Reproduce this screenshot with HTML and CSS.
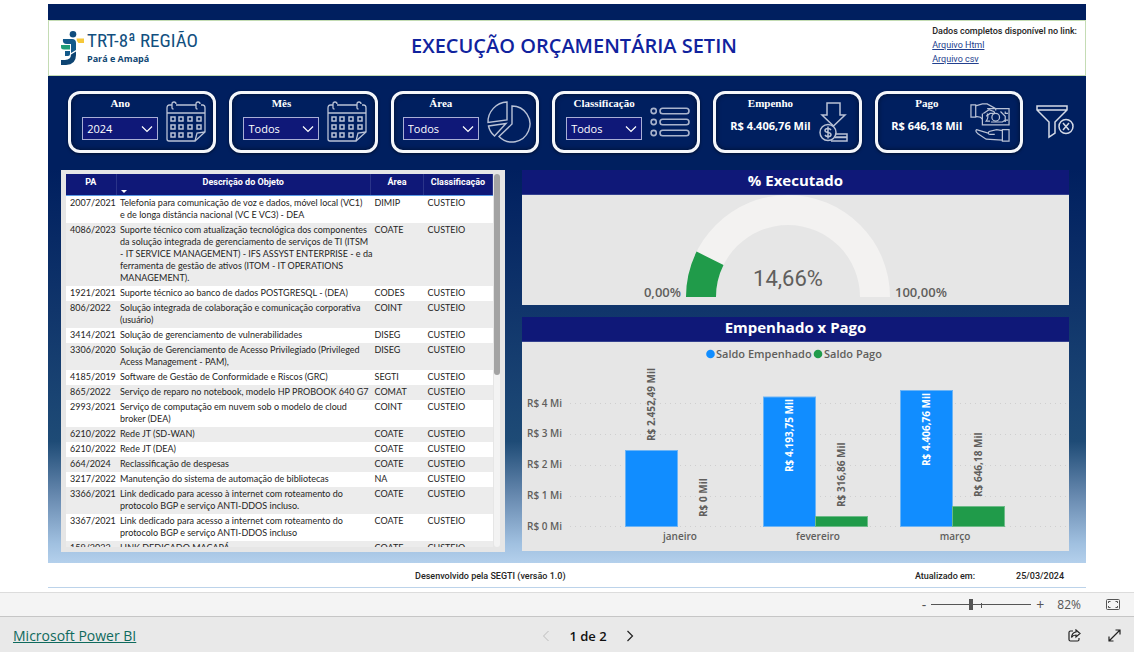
FILE: index.html
```html
<!DOCTYPE html>
<html lang="pt-BR">
<head>
<meta charset="utf-8">
<title>Execução Orçamentária SETIN</title>
<link rel="stylesheet" href="styles.css">
</head>
<body>
<svg class="defs" aria-hidden="true">
  <defs>
    <linearGradient id="body-blue" x1="0" y1="0" x2="0" y2="1"><stop offset="0" stop-color="#12598a"/><stop offset="1" stop-color="#0b3763"/></linearGradient>
    <symbol id="calendar" viewBox="0 0 40 42">
      <g fill="none" stroke="#b9c2d6" stroke-width="1.3">
        <path d="M6 4H3.500Q1 4 1 7V38Q1 40 3 40H29L39 31V7Q39 4 36.500 4H35M10 4H30M1 12H39"/>
        <path d="M6 7Q6 8 7.500 8 M6 7V3Q6 1 8 1Q10 1 10 3 M30 7V3Q30 1 32 1Q34 1 34 3 M30 7Q30 8 31.500 8"/>
        <path d="M29 40L31 32L39 31"/>
        <path stroke-width="1.500" d="M5 16h4v4h-4zM13 16h4v4h-4zM22 16h4v4h-4zM31 16h4v4h-4zM5 24h4v4h-4zM13 24h4v4h-4zM22 24h4v4h-4zM31 24h4v4h-4zM5 32h4v4h-4zM13 32h4v4h-4zM22 32h4v4h-4z"/>
      </g>
    </symbol>
    <symbol id="chevron" viewBox="0 0 12 8"><path d="M1 1.500L6 6.500L11 1.500" fill="none" stroke="#fff" stroke-width="1.200"/></symbol>
  </defs>
</svg>

<main class="report">
  <div class="band"></div>
  <header class="head">
    <div class="logo">
      <svg class="logo-mark" viewBox="0 0 24 34" aria-hidden="true">
        <circle cx="13" cy="3.300" r="3.300" fill="#0f4c7c"/>
        <path d="M3 8H12Q16 8 16 12V19L11 22V13H7Q2 13 3 8Z" fill="#12598a"/>
        <path d="M1 14H10V18.500H4Q1 18.500 1 16Z" fill="#1f9d77"/>
        <path d="M16.500 7.500H24V12H18.500Q16.500 10.500 16.500 7.500Z" fill="#f6c83a"/>
        <path d="M5 20H10V23Q10 25 8 25H5Z" fill="#12598a"/>
        <path d="M11 23.500L16 20.500V24Q16 33.500 6 34H1V29H5Q11 28.500 11 23.500Z" fill="#0d4472"/>
      </svg>
      <div class="logo-text"><span class="logo-name">TRT-8ª REGIÃO</span><span class="logo-sub">Pará e Amapá</span></div>
    </div>
    <h1>EXECUÇÃO ORÇAMENTÁRIA SETIN</h1>
    <div class="links"><strong>Dados completos disponível no link:</strong><a href="#html">Arquivo Html</a><a href="#csv">Arquivo csv</a></div>
  </header>

  <div class="body">
    <section class="cards">
      <div class="card">
        <div class="field"><label for="ano">Ano</label><div class="pick"><select id="ano"><option>2024</option></select><svg><use href="#chevron"/></svg></div></div>
        <svg class="icon" viewBox="0 0 40 42"><use href="#calendar"/></svg>
      </div>
      <div class="card">
        <div class="field"><label for="mes">Mês</label><div class="pick"><select id="mes"><option>Todos</option></select><svg><use href="#chevron"/></svg></div></div>
        <svg class="icon" viewBox="0 0 40 42"><use href="#calendar"/></svg>
      </div>
      <div class="card">
        <div class="field"><label for="area">Área</label><div class="pick"><select id="area"><option>Todos</option></select><svg><use href="#chevron"/></svg></div></div>
        <svg class="icon wide" viewBox="0 0 44 42"><g fill="none" stroke="#b9c2d6" stroke-width="1.400"><path d="M20 1V19L1 21.500A20 20 0 0 1 20 1Z"/><path d="M25 5A18 18 0 1 1 12 35.500L25 23Z"/><path d="M1.500 25L19 22.500L7.500 35A18 18 0 0 1 1.500 25Z"/></g></svg>
      </div>
      <div class="card">
        <div class="field"><label for="classe">Classificação</label><div class="pick"><select id="classe"><option>Todos</option></select><svg><use href="#chevron"/></svg></div></div>
        <svg class="icon" viewBox="0 0 40 42"><g fill="none" stroke="#a9b4cc" stroke-width="1.600"><circle cx="3.700" cy="10" r="2.600"/><circle cx="3.700" cy="21" r="2.600"/><circle cx="3.700" cy="32" r="2.600"/><rect x="10" y="7.300" width="29" height="5.400" rx="2.700"/><rect x="10" y="18.300" width="29" height="5.400" rx="2.700"/><rect x="10" y="29.300" width="29" height="5.400" rx="2.700"/></g></svg>
      </div>
      <div class="card">
        <div class="field"><span class="name">Empenho</span><output>R$ 4.406,76 Mil</output></div>
        <svg class="icon slim" viewBox="0 0 30 42"><g fill="none" stroke="#b9c2d6" stroke-width="1.500"><path d="M8 2H21V14H26L14.500 25L3 14H8Z"/><circle cx="9" cy="31.500" r="8"/><path d="M17 33H28V36H17M16 36.500H28V40H12"/><path d="M9 25.500V37.500M12 29Q11 27.500 9 27.500Q6 27.500 6 29.500Q6 31 9 31.500Q12 32 12 33.700Q12 35.500 9 35.500Q7 35.500 6 34"/></g></svg>
      </div>
      <div class="card">
        <div class="field"><span class="name">Pago</span><output>R$ 646,18 Mil</output></div>
        <svg class="icon" viewBox="0 0 42 42"><g fill="none" stroke="#b9c2d6" stroke-width="1.300"><path d="M1 3H6V16H1ZM6 4L13 2H18L27 7V9M6 15L11 16L13 18"/><path d="M18 7H41V24H13V12"/><path d="M14 12L20 8L25 10Q27 12 24 12L21 12L17 15"/><circle cx="27" cy="16" r="4"/><path d="M18 12Q20 16 17 20H21M37 10V12H40M37 21V19H40M32 10L37 15V19L34 21H22"/><path d="M34 29H41V41H34ZM34 30L28 29L20 31Q18 34 21 34H26M20 33L7 29Q5 30 8 33L17 39L34 40"/></g></svg>
      </div>
      <button class="clear" aria-label="Limpar filtros"><svg viewBox="0 0 38 34"><g fill="none" stroke="#d5dae6" stroke-width="1.500"><path d="M1 1H31V5L19 17V28L13 32V17L1 5ZM1 5H31"/><circle cx="30" cy="21.500" r="7" fill="#001f5f"/><path d="M27 18L33 25M33 18L27 25"/></g></svg></button>
    </section>

    <div class="panels">
      <section class="panel list">
        <div class="scroller">
          <table>
            <colgroup><col class="c-pa"><col><col class="c-area"><col class="c-class"></colgroup>
            <thead><tr><th>PA</th><th class="sorted">Descrição do Objeto</th><th>Área</th><th>Classificação</th></tr></thead>
            <tbody>
              <tr><td>2007/2021</td><td>Telefonia para comunicação de voz e dados, móvel local (VC1)<br>e de longa distância nacional (VC E VC3) - DEA</td><td>DIMIP</td><td>CUSTEIO</td></tr>
              <tr><td>4086/2023</td><td>Suporte técnico com atualização tecnológica dos componentes<br>da solução integrada de gerenciamento de serviços de TI (ITSM<br>- IT SERVICE MANAGEMENT) - IFS ASSYST ENTERPRISE - e da<br>ferramenta de gestão de ativos (ITOM - IT OPERATIONS<br>MANAGEMENT).</td><td>COATE</td><td>CUSTEIO</td></tr>
              <tr><td>1921/2021</td><td>Suporte técnico ao banco de dados POSTGRESQL - (DEA)</td><td>CODES</td><td>CUSTEIO</td></tr>
              <tr><td>806/2022</td><td>Solução integrada de colaboração e comunicação corporativa<br>(usuário)</td><td>COINT</td><td>CUSTEIO</td></tr>
              <tr><td>3414/2021</td><td>Solução de gerenciamento de vulnerabilidades</td><td>DISEG</td><td>CUSTEIO</td></tr>
              <tr><td>3306/2020</td><td>Solução de Gerenciamento de Acesso Privilegiado (Privileged<br>Acess Management - PAM),</td><td>DISEG</td><td>CUSTEIO</td></tr>
              <tr><td>4185/2019</td><td>Software de Gestão de Conformidade e Riscos (GRC)</td><td>SEGTI</td><td>CUSTEIO</td></tr>
              <tr><td>865/2022</td><td>Serviço de reparo no notebook, modelo HP PROBOOK 640 G7</td><td>COMAT</td><td>CUSTEIO</td></tr>
              <tr><td>2993/2021</td><td>Serviço de computação em nuvem sob o modelo de cloud<br>broker (DEA)</td><td>COINT</td><td>CUSTEIO</td></tr>
              <tr><td>6210/2022</td><td>Rede JT (SD-WAN)</td><td>COATE</td><td>CUSTEIO</td></tr>
              <tr><td>6210/2022</td><td>Rede JT (DEA)</td><td>COATE</td><td>CUSTEIO</td></tr>
              <tr><td>664/2024</td><td>Reclassificação de despesas</td><td>COATE</td><td>CUSTEIO</td></tr>
              <tr><td>3217/2022</td><td>Manutenção do sistema de automação de bibliotecas</td><td>NA</td><td>CUSTEIO</td></tr>
              <tr><td>3366/2021</td><td>Link dedicado para acesso à internet com roteamento do<br>protocolo BGP e serviço ANTI-DDOS incluso.</td><td>COATE</td><td>CUSTEIO</td></tr>
              <tr><td>3367/2021</td><td>Link dedicado para acesso a internet com roteamento do<br>protocolo BGP e serviço ANTI-DDOS incluso</td><td>COATE</td><td>CUSTEIO</td></tr>
              <tr><td>159/2022</td><td>LINK DEDICADO MACAPÁ</td><td>COATE</td><td>CUSTEIO</td></tr>
            </tbody>
          </table>
        </div>
        <div class="track"><div class="thumb"></div></div>
      </section>

      <div class="charts">
        <section class="panel">
          <h2>% Executado</h2>
          <svg class="chart" viewBox="0 0 547 110" role="img" aria-label="14,66% executado">
            <path d="M164 102A102 102 0 0 1 368 102H338A72 72 0 0 0 194 102Z" fill="#f3f2f1"/>
            <path d="M164 102A102 102 0 0 1 174.600 56.600L201.500 70A72 72 0 0 0 194 102Z" fill="#209b4a"/>
            <text class="gauge-value" x="266" y="91">14,66%</text>
            <text class="gauge-end right" x="159" y="102">0,00%</text>
            <text class="gauge-end" x="373" y="102">100,00%</text>
          </svg>
        </section>
        <section class="panel">
          <h2>Empenhado x Pago</h2>
          <svg class="chart" viewBox="0 0 547 209" role="img" aria-label="Empenhado x Pago por mês">
            <circle cx="188.500" cy="12" r="4.300" fill="#118dff"/><text class="legend" x="194" y="16">Saldo Empenhado</text>
            <circle cx="296" cy="12" r="4.300" fill="#209b4a"/><text class="legend" x="302" y="16">Saldo Pago</text>
            <g class="grid"><path d="M48 61.500H545M48 92.500H545M48 123.500H545M48 154.500H545M48 184.500H545"/></g>
            <g class="axis"><text x="5" y="65">R$ 4 Mi</text><text x="5" y="95">R$ 3 Mi</text><text x="5" y="126">R$ 2 Mi</text><text x="5" y="157">R$ 1 Mi</text><text x="5" y="188">R$ 0 Mi</text></g>
            <g fill="#118dff" stroke="#6cb4f5" stroke-width="1"><rect x="103.500" y="108.500" width="52" height="76"/><rect x="241.500" y="55" width="52" height="129.500"/><rect x="378.500" y="48.500" width="52" height="136"/></g>
            <g fill="#209b4a" stroke="#6dbb88" stroke-width="1"><rect x="293.500" y="174.500" width="52" height="10"/><rect x="430.500" y="164.500" width="52" height="20"/></g>
            <g class="axis mid"><text x="158" y="198">janeiro</text><text x="296" y="198">fevereiro</text><text x="433" y="198">março</text></g>
            <g class="bar-label">
              <text transform="translate(133 99) rotate(-90)">R$ 2.452,49 Mil</text>
              <text transform="translate(185 175) rotate(-90)">R$ 0 Mil</text>
              <text class="inside" transform="translate(271 130) rotate(-90)">R$ 4.193,75 Mil</text>
              <text transform="translate(323 165) rotate(-90)">R$ 316,86 Mil</text>
              <text class="inside" transform="translate(408 124) rotate(-90)">R$ 4.406,76 Mil</text>
              <text transform="translate(460 155) rotate(-90)">R$ 646,18 Mil</text>
            </g>
          </svg>
        </section>
      </div>
    </div>
  </div>

  <footer class="foot"><span class="by">Desenvolvido pela SEGTI (versão 1.0)</span><span>Atualizado em:</span><span>25/03/2024</span></footer>
</main>

<div class="zoombar">
  <button aria-label="Reduzir">-</button>
  <div class="slider"><input type="range" min="0" max="100" value="39" aria-label="Zoom"></div>
  <button aria-label="Ampliar">+</button>
  <span class="percent">82%</span>
  <button class="fit" aria-label="Ajustar à página"><svg viewBox="0 0 14 11"><g fill="none" stroke="#555" stroke-width="1"><rect x=".5" y=".5" width="13" height="10" rx="1"/><path d="M2.500 4V2.500H4.500M9.500 2.500H11.500V4M2.500 7V8.500H4.500M9.500 8.500H11.500V7"/></g></svg></button>
</div>
<nav class="navbar">
  <a href="#powerbi">Microsoft Power BI</a>
  <div class="pager">
    <button aria-label="Página anterior" disabled><svg viewBox="0 0 8 12"><path d="M6.500 1L1.500 6L6.500 11" fill="none" stroke="#bdbdbd"/></svg></button>
    <span>1 de 2</span>
    <button aria-label="Próxima página"><svg viewBox="0 0 8 12"><path d="M1.500 1L6.500 6L1.500 11" fill="none" stroke="#222" stroke-width="1.200"/></svg></button>
  </div>
  <div class="tools">
    <button aria-label="Compartilhar"><svg viewBox="0 0 13 13"><g fill="none" stroke="#222" stroke-width="1.200"><path d="M5 2H2.500Q1 2 1 3.500V10.500Q1 12 2.500 12H9.500Q11 12 11 10.500V9"/><path d="M8 1L12 4.500L8 8V6Q5 6 3.500 8.500Q4 3.500 8 3Z"/></g></svg></button>
    <button aria-label="Tela cheia"><svg viewBox="0 0 13 13"><path d="M7.500 1H12V5.500M12 1L1 12M1 7.500V12H5.500" fill="none" stroke="#222" stroke-width="1.200"/></svg></button>
  </div>
</nav>
</body>
</html>
```

FILE: styles.css
```css
* { box-sizing: border-box; }
body {
  margin: 0;
  background: #fff;
  font-family: "Open Sans", "Noto Sans", sans-serif;
  color: #252423;
}
button { border: 0; padding: 0; background: none; font: inherit; color: inherit; display: flex; }
.defs { position: absolute; width: 0; height: 0; }

.report { margin: 4px 48px; border-bottom: 1px solid #bcd3ea; }
.band { height: 16px; background: #001f5f; }

.head {
  display: grid;
  grid-template-columns: 1fr auto 1fr;
  align-items: center;
  height: 56px;
  border: 1px solid #c4dcb4;
}
.logo { display: flex; gap: 3px; padding-left: 11px; align-items: center; }
.logo-mark { width: 24px; height: 34px; }
.logo-text { display: flex; flex-direction: column; }
.logo-name { font: 400 19px/22px "Roboto Condensed", Roboto, sans-serif; color: #12507f; white-space: nowrap; }
.logo-sub { font-size: 9px; line-height: 14px; font-weight: 700; color: #0f4672; }
.head h1 { margin: 0; padding: 0 0 4px 14px; font-size: 20px; line-height: 28px; font-weight: 600; color: #10239e; white-space: nowrap; }
.links { justify-self: end; display: flex; flex-direction: column; padding: 0 8px 6px 0; font-size: 9px; line-height: 14px; white-space: nowrap; }
.links strong { font: 500 9px/14px Roboto, sans-serif; }
.links a { align-self: flex-start; color: #23408e; font-family: Roboto, sans-serif; }

.body {
  padding: 15px 17px 11px 13px;
  background: linear-gradient(#001f5f 0%, #001f5f 19%, #10356b 48%, #1e4b76 75%, #6688ae 86%, #a0c0e0 96%, #b4d0ec 100%);
}
.cards { display: flex; gap: 13px; padding: 0 0 0 7px; margin-right: -5px; align-items: center; }
.card {
  flex: 1;
  display: flex;
  justify-content: center;
  align-items: center;
  gap: 8px;
  height: 62px;
  padding-left: 4px;
  border: 3px solid #f4f6fa;
  border-radius: 12px;
  box-shadow: 0 1px 3px #0008, inset 0 0 5px #0008;
}
.field { display: flex; flex-direction: column; align-items: center; height: 52px; gap: 7px; }
.field label, .field .name { font: 700 11px/14px "Liberation Serif", serif; color: #fff; }
.pick { position: relative; width: 76px; }
.pick select {
  display: block;
  appearance: none;
  width: 100%;
  height: 23px;
  padding: 0 4px;
  border: 1px solid #a9afd6;
  border-radius: 0;
  background: #0f1878;
  color: #fff;
  font: 11px "Open Sans", sans-serif;
}
.pick svg { position: absolute; right: 5px; top: 8px; width: 12px; height: 8px; pointer-events: none; }
.field output { font-size: 11px; line-height: 18px; font-weight: 700; color: #fff; white-space: nowrap; }
.icon { width: 40px; height: 42px; flex: none; }
.icon.wide { width: 44px; }
.icon.slim { width: 30px; }
.clear { width: 38px; flex: none; }
.clear svg { width: 38px; height: 34px; }

.panels { display: grid; grid-template-columns: 444fr 547fr; gap: 17px; margin-top: 17px; align-items: start; }
.panel { background: #e6e6e6; }
.list { display: flex; gap: 1px; padding: 4px 5px 5px; }
.scroller { flex: 1; height: 373px; overflow: hidden; }
.track { width: 6px; border-radius: 3px; background: #f3f3f3; }
.thumb { height: 54%; border-radius: 3px; background: #a3a3a3; }
table { width: 100%; table-layout: fixed; border-collapse: collapse; font: 9px/12px Lato, sans-serif; }
.c-pa { width: 50px; }
.c-area { width: 53px; }
.c-class { width: 69px; }
th {
  position: relative;
  height: 21px;
  padding: 0 0 4px;
  background: #0f1878;
  border-bottom: 1px solid #5b9be6;
  border-right: 1px solid #2a3489;
  color: #fff;
  font-family: Roboto, sans-serif;
  font-weight: 700;
}
.sorted::after {
  content: "";
  position: absolute;
  left: 4px;
  bottom: 2px;
  border: 3px solid transparent;
  border-top-color: #fff;
  border-bottom: 0;
}
td { padding: 1px 0 2px 4px; vertical-align: top; white-space: nowrap; }
tbody tr { background: #fff; }
tbody tr:nth-child(even) { background: #ececec; }

.charts { display: flex; flex-direction: column; gap: 12px; }
.panel h2 {
  margin: 0;
  background: #0f1878;
  color: #fff;
  text-align: center;
  font-size: 15px;
  line-height: 20px;
  padding-bottom: 4px;
  font-weight: 700;
  border-bottom: 1px solid #34408f;
}
.chart { display: block; width: 100%; height: auto; fill: #605e5c; font-weight: 600; }
.gauge-value { font: 400 22px Roboto, sans-serif; text-anchor: middle; }
.gauge-end { font-size: 13px; }
.right { text-anchor: end; }
.legend { font-size: 11px; }
.grid { stroke: #cfcfcf; stroke-dasharray: 1 4; }
.axis { font-size: 10px; }
.mid { text-anchor: middle; }
.bar-label { font-size: 10px; font-weight: 700; }
.inside { fill: #fff; }

.foot { display: flex; justify-content: flex-end; gap: 41px; padding: 2px 22px 0 0; font: 500 9px/22px Roboto, sans-serif; }
.by { margin: 0 auto 0 367px; }

.zoombar {
  display: flex;
  justify-content: flex-end;
  align-items: center;
  gap: 5px;
  height: 24px;
  padding-right: 14px;
  background: #f4f4f4;
  border-top: 1px solid #dcdcdc;
  color: #555;
  font-size: 14px;
}
.slider { position: relative; display: flex; }
.slider::after { content: ""; position: absolute; left: 50px; top: 4px; width: 1px; height: 5px; background: #555; }
.slider input { appearance: none; width: 100px; height: 12px; margin: 0; background: linear-gradient(#555, #555) center / 100% 1px no-repeat; }
.slider input::-webkit-slider-thumb { appearance: none; width: 4px; height: 11px; background: #555; }
.percent { margin: 0 20px 0 8px; font-size: 12px; }
.fit svg { width: 14px; height: 11px; }

.navbar {
  display: grid;
  grid-template-columns: 1fr auto 1fr;
  align-items: center;
  height: 36px;
  padding: 2px 13px 0;
  background: #e9e9e9;
  border-top: 1px solid #c6c6c6;
  font-size: 14px;
}
.navbar a { color: #0f6a5d; }
.pager { display: flex; align-items: center; gap: 19px; padding-left: 42px; font-weight: 600; font-size: 13px; color: #111; }
.pager svg { width: 8px; height: 12px; }
.tools { justify-self: end; display: flex; gap: 27px; }
.tools svg { width: 13px; height: 13px; }
```
